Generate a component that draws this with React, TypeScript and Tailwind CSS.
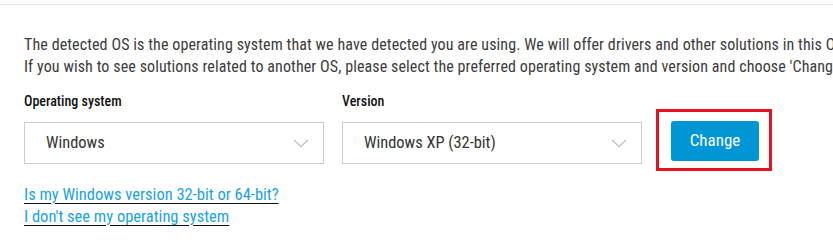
import React from 'react'

const Chevron: React.FC = () => (
  <svg width="16" height="9" viewBox="0 0 16 9" fill="none" className="shrink-0">
    <polyline points="1,1 8,7.5 15,1" stroke="#c4c4c4" strokeWidth="1.4" />
  </svg>
)

const Select: React.FC<{ value: string }> = ({ value }) => (
  <div className="flex h-[42px] w-[300px] items-center justify-between border border-[#cccccc] bg-white pl-[21px] pr-[14px]">
    <span className="text-[16.4px] text-[#333333]">{value}</span>
    <Chevron />
  </div>
)

export default function App() {
  return (
    <div className="h-[250px] w-[833px] overflow-hidden bg-white font-['Roboto_Condensed',sans-serif]">
      <div className="mt-[4px] h-px bg-[#e8e8e8]" />

      <div className="mt-[29px] whitespace-nowrap pl-6 text-[16px] leading-[22px] tracking-[0.1px] text-[#3c3c3c]">
        <p>
          The detected OS is the operating system that we have detected you are using. We will offer drivers and other solutions in this OS.
        </p>
        <p>
          If you wish to see solutions related to another OS, please select the preferred operating system and version and choose 'Change'.
        </p>
      </div>

      <div className="mt-[13px] flex items-start pl-6">
        <div className="flex flex-col">
          <label className="text-[14px] font-medium leading-[20px] text-[#111111]">Operating system</label>
          <div className="mt-[11px]">
            <Select value="Windows" />
          </div>
        </div>
        <div className="ml-[18px] flex flex-col">
          <label className="text-[14px] font-medium leading-[20px] text-[#111111]">Version</label>
          <div className="mt-[11px]">
            <Select value="Windows XP (32-bit)" />
          </div>
        </div>
        <div className="relative ml-[29px] mt-[30px]">
          <button className="h-[40px] w-[88px] rounded-[3px] bg-[#0096d6] text-[17px] text-white">
            Change
          </button>
          <div className="absolute -bottom-[10px] -left-[15px] -right-[13px] -top-[12px] border-[3px] border-[#e3141e]" />
        </div>
      </div>

      <div className="mt-[20px] flex flex-col items-start pl-6 text-[16.5px] leading-[22px]">
        <a href="#" className="text-[#1aa3e0] underline decoration-[#111111] underline-offset-[3px]">
          Is my Windows version 32-bit or 64-bit?
        </a>
        <a href="#" className="text-[#1aa3e0] underline decoration-[#111111] underline-offset-[3px]">
          I don't see my operating system
        </a>
      </div>
    </div>
  )
}
